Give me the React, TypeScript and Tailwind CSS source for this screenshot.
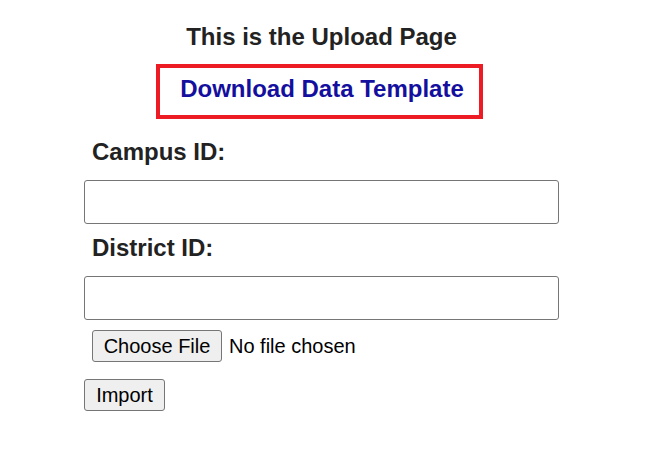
import React from 'react';

const UploadPage: React.FC = () => {
    return (
        <div className="w-[651px] h-[466px] bg-white font-['Liberation_Sans',Arial,sans-serif] text-[#222]">
            <div className="ml-[84px] w-[475px] pt-[23px] flex flex-col items-start">
                {/* Judul */}
                <h3 className="w-full text-center text-[24px] leading-[28px] font-bold">This is the Upload Page</h3>

                {/* Link template */}
                <div className="mt-[13px] ml-[72px] w-[327px] h-[55px] border-4 border-[#ed1c24] flex justify-center pt-[7px] pl-[5px]">
                    <a href="#" className="text-[24px] leading-[28px] font-bold text-[#140f9e] no-underline">
                        Download Data Template
                    </a>
                </div>

                {/* Form */}
                <label className="mt-[19px] ml-[8px] text-[24px] leading-[28px] font-bold">Campus ID:</label>
                <input
                    type="text"
                    className="mt-[14px] w-[475px] h-[44px] border border-[#767676] rounded-[3px] px-2 text-[20px] outline-none"
                />

                <label className="mt-[10px] ml-[8px] text-[24px] leading-[28px] font-bold">District ID:</label>
                <input
                    type="text"
                    className="mt-[14px] w-[475px] h-[44px] border border-[#767676] rounded-[3px] px-2 text-[20px] outline-none"
                />

                <div className="mt-[10px] ml-[8px] flex items-center">
                    <button className="w-[130px] h-[32px] border border-[#767676] rounded-[3px] bg-[#efefef] text-[20px] leading-[23px] text-black">
                        Choose File
                    </button>
                    <span className="ml-[7px] text-[20px] leading-[23px] text-black">No file chosen</span>
                </div>

                <button className="mt-[17px] w-[81px] h-[32px] border border-[#767676] rounded-[3px] bg-[#efefef] text-[20px] leading-[23px] text-black">
                    Import
                </button>
            </div>
        </div>
    );
};

export default function App() {
    return <UploadPage />;
}
